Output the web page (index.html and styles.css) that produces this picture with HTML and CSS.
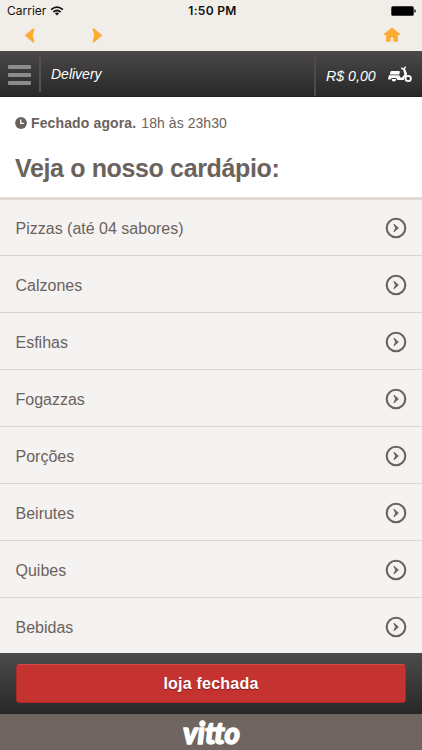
FILE: index.html
```html
<!DOCTYPE html>
<html lang="pt-BR">
<head>
<meta charset="utf-8">
<title>Delivery</title>
<link rel="stylesheet" href="styles.css">
</head>
<body>
<svg width="0" height="0" class="defs"><defs>
<symbol id="go" viewBox="0 0 22 22"><circle cx="11" cy="11" r="9.3" fill="none" stroke="#6c625d" stroke-width="2.1"/><path d="M8.9 7.1L13.4 11L8.9 14.9L10.6 11Z" fill="#6c625d" stroke="#6c625d" stroke-width=".9"/></symbol>
</defs></svg>
<div class="screen">
<div class="status">
<div class="carrier"><span>Carrier</span><svg width="14" height="10" viewBox="0 0 14 10"><g fill="none" stroke="#111" stroke-width="1.7"><path d="M1.1 3.7Q7 -1.5 12.9 3.7"/><path d="M3.4 6Q7 3 10.6 6"/></g><path d="M4.9 7.3Q7 5.8 9.1 7.3L7 9.5Z" fill="#111"/></svg></div>
<span class="time">1:50 PM</span>
<svg class="battery" width="26" height="10" viewBox="0 0 26 10"><rect x="1.3" y=".2" width="22.4" height="9.6" rx="1.5"/><path d="M24.4 3.2Q25.8 3.5 25.8 5T24.4 6.8Z"/></svg>
</div>
<nav class="nav">
<svg class="back" width="10" height="15" viewBox="0 0 10 15"><path d="M8.5 1.2L.9 7.4L8.5 13.7L6.9 7.4Z"/></svg>
<svg class="next" width="10" height="15" viewBox="0 0 10 15"><path d="M1.5 1.2L9.1 7.4L1.5 13.7L3.1 7.4Z"/></svg>
<svg class="home" width="18" height="16" viewBox="0 0 18 16"><path d="M9 1.3L1.5 7.3H3.8V14H7.1V9.8H10.9V14H14.2V7.3H16.5Z"/></svg>
</nav>
<header class="header">
<div class="menu"><i></i><i></i><i></i></div>
<div class="title">Delivery</div>
<div class="cart"><span>R$ 0,00</span>
<svg width="24" height="17" viewBox="0 0 24 17"><g fill="#fff"><path d="M2.4 6.1Q2.6 5 3.8 5H10.9Q12 5 11.8 6.1L11.4 8.4H1.8Z"/><path d="M1.2 9.2H11.2L12.4 11.4H14.1L16.4 8.6L15.2 4H17.3L19 9Q16.4 10.5 15.7 14H9.4Q9 12.2 7 12H4Q2.9 12.3 2.6 13.6H.3Q-.1 10.7 1.2 9.2Z"/><path d="M3.6 13H8.2Q8 15.6 5.9 15.6Q3.8 15.6 3.6 13Z"/></g><circle cx="20.2" cy="12.5" r="2.7" fill="none" stroke="#fff" stroke-width="1.8"/><path d="M13.2 2L15.8 3.3L17.6 .6M16.1 2.5L18.5 8.5" fill="none" stroke="#fff" stroke-width="1.5"/></svg></div>
</header>
<section class="intro">
<p class="hours"><svg width="12" height="12" viewBox="0 0 11 11"><circle cx="5.5" cy="5.5" r="5.4" fill="#6c625d"/><path d="M5.3 2.2V5.8H8.1" fill="none" stroke="#fff" stroke-width="1.2"/></svg><b>Fechado agora.</b><span>18h às 23h30</span></p>
<h1>Veja o nosso cardápio:</h1>
</section>
<ul class="list">
<li><span>Pizzas (até 04 sabores)</span><svg><use href="#go"/></svg></li>
<li><span>Calzones</span><svg><use href="#go"/></svg></li>
<li><span>Esfihas</span><svg><use href="#go"/></svg></li>
<li><span>Fogazzas</span><svg><use href="#go"/></svg></li>
<li><span>Porções</span><svg><use href="#go"/></svg></li>
<li><span>Beirutes</span><svg><use href="#go"/></svg></li>
<li><span>Quibes</span><svg><use href="#go"/></svg></li>
<li><span>Bebidas</span><svg><use href="#go"/></svg></li>
</ul>
<div class="action"><button>loja fechada</button></div>
<footer class="footer"><svg width="72" height="36" viewBox="0 0 72 36"><text x="8" y="24.4" textLength="57" lengthAdjust="spacingAndGlyphs" transform="scale(1 1.23)">vitto</text></svg></footer>
</div>
</body>
</html>
```
FILE: styles.css
```css
* { box-sizing: border-box; }
body { margin: 0; background: #f4f3f1; color: #6c625d; font-family: "Liberation Sans", sans-serif; }
.defs { display: block; }
.screen { width: 422px; height: 750px; overflow: hidden; display: flex; flex-direction: column; }
.status { height: 21px; flex: none; background: #f1eee9; color: #111; display: grid; grid-template-columns: 1fr auto 1fr; align-items: center; padding: 1px 6px 0 7px; font: 12px/20px Inter, sans-serif; }
.carrier { display: flex; align-items: center; gap: 4px; letter-spacing: 0; }
.time { font-weight: 600; letter-spacing: .3px; padding-left: 2px; }
.battery { justify-self: end; }
.nav { height: 30px; flex: none; background: #f1eee9; display: flex; align-items: center; padding: 0 21px 2px 25px; fill: #fbad36; stroke: #fbad36; stroke-width: 1.8; stroke-linejoin: round; }
.next { margin-left: 57px; }
.home { margin-left: auto; stroke-width: 1.4; }
.header { height: 46px; flex: none; display: flex; background: linear-gradient(#4a4848, #292828); border-bottom: 1px solid #222; color: #fff; font-style: italic; font-size: 15px; }
.menu { width: 41px; border-right: 2px solid #565050; margin: 6px 0 4px; padding: 8px 0 0 8px; display: flex; flex-direction: column; gap: 4px; }
.menu i { width: 23px; height: 4px; border-radius: 1px; background: #8d8c8c; }
.title { flex: 1; padding: 15px 0 0 10px; line-height: 17px; font-size: 14px; }
.cart { width: 108px; border-left: 2px solid #514948; display: flex; align-items: flex-start; padding: 15px 0 0 10px; line-height: 20px; font-size: 14.2px; }
.cart svg { margin-left: 12px; }
.intro { height: 103px; flex: none; background: #fff; border-bottom: 3px solid #e0d9d4; padding: 17px 15px 0; }
.hours { margin: 0; display: flex; align-items: center; height: 18px; font-size: 14px; }
.hours b { margin: 0 5px 0 4px; letter-spacing: .13px; }
.hours span { letter-spacing: .06px; }
h1 { margin: 20px 0 0; font-size: 25px; line-height: 32px; letter-spacing: -.36px; }
.list { list-style: none; margin: 0; padding: 0; flex: 1; min-height: 0; overflow: hidden; }
.list li { height: 57px; border-bottom: 1px solid #d8d6d4; padding: 1px 15px 0; display: flex; align-items: center; justify-content: space-between; font-size: 16px; }
.list li:first-child { height: 56px; }
.list li span { padding: 2px 0 0 .5px; }
.list svg { width: 22px; height: 22px; margin-top: 1px; }
.list li:first-child svg { margin-top: 0; }
.action { height: 61px; flex: none; background: linear-gradient(#4c4b4b, #292828); padding: 11px 16px 0; }
.action button { display: block; width: 100%; height: 39px; border: 1px solid #ad2929; border-top-color: #d54a47; border-radius: 4px; background: #c53331; color: #fff; font: bold 16px/36px "Liberation Sans", sans-serif; letter-spacing: .22px; padding: 1px 0 0; text-shadow: 0 1px 1px #801d1c; }
.footer { height: 36px; flex: none; background: #6f6560; display: flex; justify-content: center; }
.footer text { font: italic 900 25px/1 Lato, sans-serif; fill: #fff; stroke: #fff; stroke-width: 1.2; stroke-linejoin: round; }
```
